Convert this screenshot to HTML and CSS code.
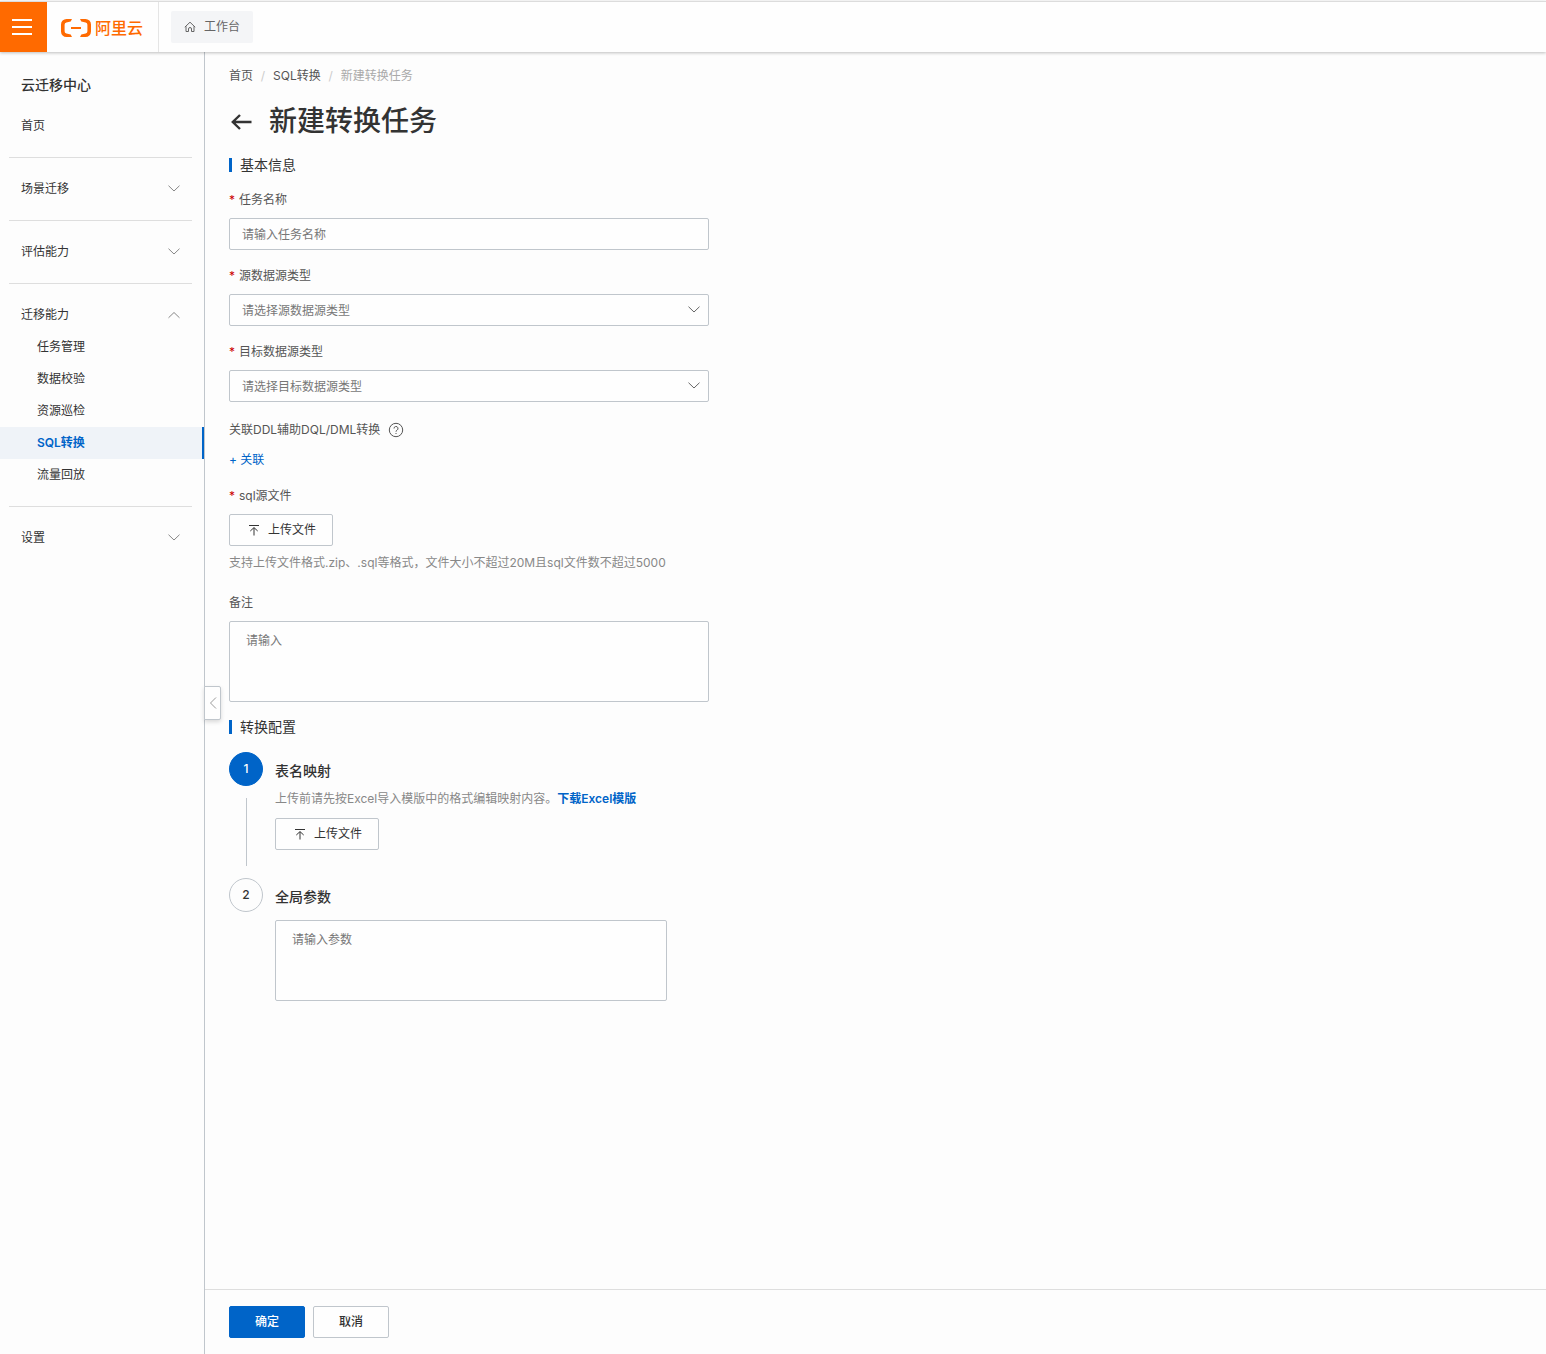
FILE: index.html
```html
<!DOCTYPE html>
<html lang="zh-CN">
<head>
  <meta charset="UTF-8" />
  <meta name="viewport" content="width=device-width, initial-scale=1.0" />
  <title>新建转换任务 - 云迁移中心</title>
  <link rel="stylesheet" href="styles.css">
</head>
<body>
  <!-- shared icons -->
  <svg class="sprite" aria-hidden="true">
    <symbol id="icon-down" viewBox="0 0 14 14"><path d="M1.500 3.700 7 9l5.500-5.300" /></symbol>
    <symbol id="icon-up" viewBox="0 0 14 14"><path d="M1.500 9.800 7 4.500l5.500 5.300" /></symbol>
    <symbol id="icon-upload" viewBox="0 0 16 16"><path d="M3 3.500h10M8 13.500V5.800M4.300 9 8 5.600 11.700 9" /></symbol>
  </svg>

  <header class="topbar">
    <button class="menu-btn" type="button" aria-label="菜单">
      <svg width="20" height="16" viewBox="0 0 20 16"><path d="M0 1h20M0 8h20M0 15h20" /></svg>
    </button>
    <a class="logo" href="#">
      <svg width="30" height="18" viewBox="0 0 30 18">
        <path d="M11 0H5.500A5.500 5.500 0 0 0 0 5.500v7A5.500 5.500 0 0 0 5.500 18H11l-1.300-2.600-4.300-.9a2.200 2.200 0 0 1-1.800-2.200V5.700a2.200 2.200 0 0 1 1.800-2.200l4.300-.9z" />
        <path d="M19 0h5.500A5.500 5.500 0 0 1 30 5.500v7a5.500 5.500 0 0 1-5.500 5.500H19l1.300-2.600 4.300-.9a2.200 2.200 0 0 0 1.800-2.200V5.700a2.200 2.200 0 0 0-1.800-2.200l-4.300-.9z" />
        <path d="M10 8h10v2H10z" />
      </svg>
      <span>阿里云</span>
    </a>
    <a class="workbench" href="#">
      <svg width="12" height="12" viewBox="0 0 12 12"><path d="M.8 6.200 6 1.200l5.200 5M2 5.300v5.200h2.500V8a1.500 1.500 0 0 1 3 0v2.500H10V5.300" /></svg>
      工作台
    </a>
  </header>

  <div class="layout">
    <nav class="sidebar">
      <h2 class="sidebar-title">云迁移中心</h2>
      <div class="nav-group">
        <a class="nav-item" href="#">首页</a>
      </div>
      <div class="nav-group">
        <a class="nav-item" href="#">场景迁移 <svg class="arrow"><use href="#icon-down" /></svg></a>
      </div>
      <div class="nav-group">
        <a class="nav-item" href="#">评估能力 <svg class="arrow"><use href="#icon-down" /></svg></a>
      </div>
      <div class="nav-group">
        <a class="nav-item" href="#">迁移能力 <svg class="arrow"><use href="#icon-up" /></svg></a>
        <a class="nav-item sub" href="#">任务管理</a>
        <a class="nav-item sub" href="#">数据校验</a>
        <a class="nav-item sub" href="#">资源巡检</a>
        <a class="nav-item sub active" href="#">SQL转换</a>
        <a class="nav-item sub" href="#">流量回放</a>
      </div>
      <div class="nav-group">
        <a class="nav-item" href="#">设置 <svg class="arrow"><use href="#icon-down" /></svg></a>
      </div>
    </nav>

    <main class="main">
      <button class="collapse" type="button" aria-label="收起">
        <svg width="8" height="12" viewBox="0 0 8 12"><path d="M7 .5 1.500 6 7 11.500" /></svg>
      </button>

      <form class="content" id="taskForm">
        <div class="breadcrumb">
          <a href="#">首页</a><span class="sep">/</span><a href="#">SQL转换</a><span class="sep">/</span><span class="current">新建转换任务</span>
        </div>

        <div class="page-title">
          <a href="#" aria-label="返回"><svg width="24" height="20" viewBox="0 0 24 20"><path d="M22.500 11H4M11 4 3.800 11l7.200 7" /></svg></a>
          <h1>新建转换任务</h1>
        </div>

        <h3 class="section-title">基本信息</h3>

        <div class="field">
          <label class="required" for="name">任务名称</label>
          <input type="text" id="name" placeholder="请输入任务名称" />
        </div>

        <div class="field">
          <label class="required" for="source">源数据源类型</label>
          <div class="select">
            <select id="source">
              <option value="">请选择源数据源类型</option>
            </select>
            <svg class="arrow"><use href="#icon-down" /></svg>
          </div>
        </div>

        <div class="field">
          <label class="required" for="target">目标数据源类型</label>
          <div class="select">
            <select id="target">
              <option value="">请选择目标数据源类型</option>
            </select>
            <svg class="arrow"><use href="#icon-down" /></svg>
          </div>
        </div>

        <div class="field">
          <div class="label-tip">
            关联DDL辅助DQL/DML转换
            <svg width="16" height="16" viewBox="0 0 16 16">
              <circle cx="8" cy="8" r="6.700" />
              <path d="M6 6.500a2 2 0 1 1 3 1.700c-.7.400-1 .7-1 1.500M8 11v1" />
            </svg>
          </div>
          <a class="link" href="#">+ 关联</a>
        </div>

        <div class="field">
          <label class="required" for="sqlFile">sql源文件</label>
          <button class="btn upload" type="button" id="sqlFile"><svg><use href="#icon-upload" /></svg>上传文件</button>
          <p class="help">支持上传文件格式.zip、.sql等格式，文件大小不超过20M且sql文件数不超过5000</p>
        </div>

        <div class="field">
          <label for="remark">备注</label>
          <textarea id="remark" placeholder="请输入"></textarea>
        </div>

        <h3 class="section-title">转换配置</h3>

        <div class="step">
          <div class="step-side">
            <span class="step-num current">1</span>
            <span class="step-line"></span>
          </div>
          <div class="step-body">
            <h4>表名映射</h4>
            <p class="step-desc">上传前请先按Excel导入模版中的格式编辑映射内容。<a href="#">下载Excel模版</a></p>
            <button class="btn upload" type="button"><svg><use href="#icon-upload" /></svg>上传文件</button>
          </div>
        </div>

        <div class="step">
          <div class="step-side">
            <span class="step-num">2</span>
          </div>
          <div class="step-body">
            <h4><label for="params">全局参数</label></h4>
            <textarea id="params" placeholder="请输入参数"></textarea>
          </div>
        </div>
      </form>

      <footer class="actions">
        <button class="btn primary" type="submit" form="taskForm">确定</button>
        <button class="btn cancel" type="button">取消</button>
      </footer>
    </main>
  </div>
</body>
</html>
```
FILE: styles.css
```css
* {
  box-sizing: border-box;
}

body {
  margin: 0;
  min-height: 100vh;
  display: flex;
  flex-direction: column;
  font-family: Inter, "Noto Sans CJK SC", sans-serif;
  font-size: 12px;
  line-height: 20px;
  color: #333;
  background: #fdfdfd;
}

h1, h2, h3, h4, p {
  margin: 0;
}

a {
  color: inherit;
  text-decoration: none;
}

button, input, select, textarea {
  font: inherit;
  color: inherit;
}

svg {
  flex: none;
  fill: none;
  stroke: currentColor;
}

.sprite {
  position: absolute;
  width: 0;
  height: 0;
}

.arrow {
  width: 14px;
  height: 14px;
  color: #888;
}

/* TOP BAR */
.topbar {
  position: relative;
  z-index: 2;
  display: flex;
  align-items: center;
  height: 51px;
  margin-top: 1px;
  border-top: 1px solid #dcdcdc;
  background: #fefefe;
  box-shadow: 0 1px 3px rgba(0, 0, 0, 0.25);
}

.menu-btn {
  display: flex;
  align-items: center;
  width: 47px;
  height: 100%;
  padding: 0 12px;
  border: none;
  background: #ff6a00;
  color: #fff;
  cursor: pointer;
}

.menu-btn svg {
  stroke-width: 2;
}

.logo {
  display: flex;
  align-items: center;
  gap: 4px;
  height: 100%;
  padding: 2px 15px 0 14px;
  border-right: 1px solid #e5e5e5;
  color: #ff6a00;
  font-size: 16px;
  font-weight: 500;
}

.logo svg {
  fill: currentColor;
  stroke: none;
}

.workbench {
  display: flex;
  align-items: center;
  gap: 8px;
  height: 32px;
  margin-left: 12px;
  padding: 0 13px;
  border-radius: 2px;
  background: #f4f5f7;
  color: #666;
}

/* SIDEBAR */
.layout {
  flex: 1;
  display: flex;
}

.sidebar {
  flex: none;
  width: 205px;
  padding-top: 22px;
  border-right: 1px solid #c0c6cc;
}

.sidebar-title {
  padding: 0 21px;
  margin-bottom: 14px;
  font-size: 14px;
  line-height: 22px;
  font-weight: 500;
}

.nav-group + .nav-group::before {
  content: "";
  display: block;
  height: 1px;
  margin: 15px 12px 15px 9px;
  background: #dedede;
}

.nav-item {
  display: flex;
  align-items: center;
  justify-content: space-between;
  height: 32px;
  padding: 0 23px 0 21px;
}

.nav-item.sub {
  padding-left: 37px;
}

.nav-item.active {
  background: #eff3f8;
  border-right: 2px solid #0064c8;
  color: #0064c8;
  font-weight: 600;
}

/* MAIN */
.main {
  position: relative;
  flex: 1;
  min-width: 0;
  display: flex;
  flex-direction: column;
}

.collapse {
  position: absolute;
  left: -1px;
  top: 50%;
  transform: translateY(-50%);
  display: flex;
  align-items: center;
  justify-content: center;
  width: 17px;
  height: 34px;
  padding: 0;
  border: 1px solid #c0c6cc;
  border-radius: 0 2px 2px 0;
  background: #fefefe;
  box-shadow: 0 2px 4px rgba(0, 0, 0, 0.15);
  color: #999;
  cursor: pointer;
}

.content {
  flex: 1;
  padding: 14px 24px;
}

.breadcrumb {
  display: flex;
  color: #555;
}

.breadcrumb .sep {
  width: 20px;
  text-align: center;
  color: #ccc;
}

.breadcrumb .current {
  color: #aaa;
}

.page-title {
  display: flex;
  align-items: center;
  gap: 16px;
  margin: 15px 0 13px;
}

.page-title a {
  display: flex;
}

.page-title svg {
  stroke-width: 2.4;
}

.page-title h1 {
  font-size: 28px;
  line-height: 40px;
  font-weight: 500;
}

.section-title {
  display: flex;
  align-items: center;
  gap: 8px;
  margin: 14px 0;
  font-size: 14px;
  line-height: 22px;
  font-weight: 400;
}

.page-title + .section-title {
  margin-top: 0;
}

.section-title::before {
  content: "";
  width: 3px;
  height: 14px;
  background: #0064c8;
}

/* FORM */
.field {
  display: flex;
  flex-direction: column;
  align-items: flex-start;
  gap: 8px;
  max-width: 480px;
}

.field + .field {
  margin-top: 16px;
}

.field label,
.label-tip {
  color: #555;
}

.required::before {
  content: "*";
  margin-right: 4px;
  color: #c00;
}

.label-tip {
  display: flex;
  align-items: center;
  gap: 8px;
  height: 24px;
}

input, select, textarea {
  display: block;
  width: 100%;
  height: 32px;
  padding: 0 12px;
  border: 1px solid #c0c6cc;
  border-radius: 2px;
  background: #fefefe;
  outline: none;
}

textarea {
  height: 81px;
  padding: 9px 16px;
  resize: none;
}

::placeholder {
  color: #777;
  opacity: 1;
}

.select {
  display: grid;
  align-items: center;
  width: 100%;
}

.select select,
.select .arrow {
  grid-area: 1 / 1;
}

.select select {
  appearance: none;
  padding-top: 1px;
  color: #777;
}

.select .arrow {
  justify-self: end;
  margin-right: 8px;
  color: #666;
  pointer-events: none;
}

.link {
  color: #0064c8;
}

.help {
  margin-bottom: 5px;
  line-height: 18px;
  color: #888;
}

.btn {
  display: inline-flex;
  align-items: center;
  justify-content: center;
  height: 32px;
  padding: 0 16px;
  border: 1px solid #c0c6cc;
  border-radius: 2px;
  background: #fefefe;
  cursor: pointer;
}

.upload {
  gap: 6px;
}

.upload svg {
  width: 16px;
  height: 16px;
}

/* STEPS */
.step {
  display: flex;
  gap: 12px;
}

.step-side {
  display: flex;
  flex-direction: column;
  align-items: center;
}

.step-num {
  display: flex;
  align-items: center;
  justify-content: center;
  width: 34px;
  height: 34px;
  border: 1px solid #c0c6cc;
  border-radius: 50%;
  font-weight: 500;
}

.step-num.current {
  border-color: #0064c8;
  background: #0064c8;
  color: #fff;
}

.step-line {
  flex: 1;
  width: 1px;
  margin: 12px 0;
  background: #c0c6cc;
}

.step-body {
  flex: 1;
  max-width: 392px;
  padding: 8px 0 28px;
}

.step-body h4 {
  margin-bottom: 8px;
  font-size: 14px;
  line-height: 22px;
  font-weight: 500;
}

.step-body textarea {
  margin-top: 12px;
}

.step-desc {
  margin-bottom: 10px;
  line-height: 18px;
  color: #888;
}

.step-desc a {
  color: #0064c8;
  font-weight: 600;
}

/* FOOTER */
.actions {
  display: flex;
  gap: 8px;
  padding: 16px 24px;
  border-top: 1px solid #dedede;
}

.actions .btn {
  width: 76px;
  font-weight: 500;
}

.primary {
  border-color: #0064c8;
  background: #0064c8;
  color: #fff;
}
```
